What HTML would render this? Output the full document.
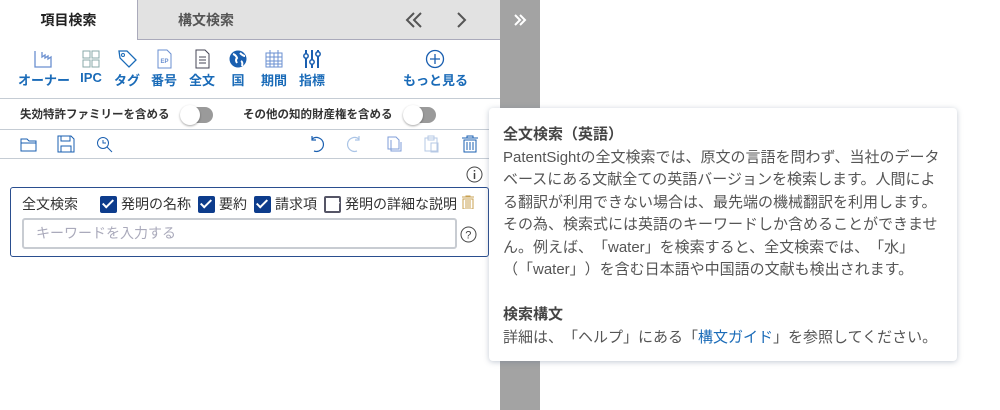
<!DOCTYPE html>
<html><head><meta charset="utf-8"><style>
*{box-sizing:border-box;margin:0;padding:0}
body{width:1000px;height:410px;background:#fff;position:relative;overflow:hidden;font-family:"Liberation Sans","Noto Sans CJK JP",sans-serif;color:#333;text-spacing-trim:space-all}
.abs{position:absolute}
.tab1{left:0;top:0;width:137px;height:40px;background:#fff;font-size:14px;font-weight:bold;text-align:center;line-height:40px;color:#222}
.tab2{left:137px;top:0;width:363px;height:40px;background:#e2e2e2;border-left:1px solid #aab;border-bottom:1px solid #aab}
.bar{left:500px;top:0;width:40px;height:410px;background:#a3a3a3}
.ic{position:absolute;top:49px;text-align:center;font-size:13px;font-weight:bold;color:#1a6bb8;white-space:nowrap}
.ic svg{display:block;margin:0 auto 1px}
.line{position:absolute;left:0;width:500px;height:1px;background:#c5ccd4}
.tog{position:absolute;width:32px;height:16px;background:#9a9a9a;border-radius:8px}
.tog:before{content:"";position:absolute;left:-1px;top:-2px;width:20px;height:20px;border-radius:50%;background:#fff;box-shadow:0 1px 2px rgba(0,0,0,.35)}
.cb{position:absolute;top:196px;width:17px;height:17px;background:#0d3c8c;border-radius:2px}
.cb:after{content:"";position:absolute;left:5px;top:1px;width:4px;height:9px;border:solid #fff;border-width:0 2px 2px 0;transform:rotate(45deg)}
.cl{position:absolute;top:194px;font-size:14px;color:#333;white-space:nowrap}
.tip{left:489px;top:108px;width:468px;height:253px;background:#fff;border-radius:4px;box-shadow:0 1px 6px rgba(80,100,130,.35);padding:16px 14px;font-size:15px;line-height:22.5px;color:#555;white-space:nowrap}
</style></head><body>
<div class="abs tab1">項目検索</div>
<div class="abs tab2"><span class="abs" style="left:40px;top:10px;font-size:14px;font-weight:bold;color:#555">構文検索</span>
<svg class="abs" style="left:266px;top:11px" width="20" height="18"><path d="M10 2L3 9l7 7M17 2l-7 7 7 7" stroke="#555" stroke-width="2" fill="none"/></svg>
<svg class="abs" style="left:317px;top:11px" width="12" height="18"><path d="M3 2l7 7-7 7" stroke="#555" stroke-width="2" fill="none"/></svg></div>
<div class="abs bar"><svg class="abs" style="left:13px;top:13px" width="14" height="14"><path d="M2 2l5 5-5 5M7 2l5 5-5 5" stroke="#fff" stroke-width="2" fill="none"/></svg></div>

<div class="ic" style="left:18px;width:50px"><svg width="20" height="20"><path d="M2 2v16h16V8l-3 2V7l-3 2V6l-3 2V3" stroke="#6a8fd0" fill="none" stroke-width="1.3"/></svg>オーナー</div>
<div class="ic" style="left:78px;width:26px"><svg width="20" height="20"><rect x="2" y="2" width="7" height="7" stroke="#8aa" fill="none"/><rect x="11" y="2" width="7" height="7" stroke="#8aa" fill="none"/><rect x="2" y="11" width="7" height="7" stroke="#8aa" fill="none"/><rect x="11" y="11" width="7" height="7" stroke="#8aa" fill="none"/></svg>IPC</div>
<div class="ic" style="left:113px;width:28px"><svg width="20" height="20"><path d="M2 2h8l9 9-7 7-9-9z" stroke="#1a6bb8" fill="none" stroke-width="1.3"/><circle cx="6" cy="6" r="1.5" stroke="#1a6bb8" fill="none"/></svg>タグ</div>
<div class="ic" style="left:150px;width:28px"><svg width="20" height="20"><path d="M4 1h9l4 4v14H4z" stroke="#6a8fd0" fill="none"/><text x="6.5" y="14" font-size="6" fill="#6a8fd0" font-family="Liberation Sans">EP</text></svg>番号</div>
<div class="ic" style="left:188px;width:28px"><svg width="20" height="20"><path d="M4 1h9l4 4v14H4z M7 8h7M7 11h7M7 14h7" stroke="#445" fill="none"/></svg>全文</div>
<div class="ic" style="left:227px;width:22px"><svg width="20" height="20"><circle cx="10" cy="10" r="8.5" fill="#1a5fb0"/><path d="M5 5q3 1 4 4-2 2 0 5M12 4q3 3 5 3M13 12q2 1 1 5" stroke="#fff" stroke-width="2" fill="none"/></svg>国</div>
<div class="ic" style="left:260px;width:28px"><svg width="20" height="20"><rect x="2" y="4" width="16" height="14" stroke="#6a8fd0" fill="none"/><path d="M2 8h16M2 12h16M2 15h16M6 4v14M10 4v14M14 4v14M6 1v4M14 1v4" stroke="#6a8fd0"/></svg>期間</div>
<div class="ic" style="left:298px;width:28px"><svg width="20" height="20"><path d="M4 1v18M10 1v18M16 1v18" stroke="#1a5fb0" stroke-width="2"/><circle cx="4" cy="7" r="2.2" fill="#fff" stroke="#1a5fb0" stroke-width="1.5"/><circle cx="10" cy="13" r="2.2" fill="#fff" stroke="#1a5fb0" stroke-width="1.5"/><circle cx="16" cy="5" r="2.2" fill="#fff" stroke="#1a5fb0" stroke-width="1.5"/></svg>指標</div>
<div class="ic" style="left:403px;width:64px"><svg width="20" height="20"><circle cx="10" cy="10" r="8.5" stroke="#1a5fb0" fill="none" stroke-width="1.3"/><path d="M10 5v10M5 10h10" stroke="#1a5fb0" stroke-width="1.3"/></svg>もっと見る</div>

<div class="line" style="top:98px"></div>
<div class="abs" style="left:20px;top:106px;font-size:11.5px;font-weight:bold;color:#333;white-space:nowrap">失効特許ファミリーを含める</div>
<div class="tog" style="left:181px;top:107px"></div>
<div class="abs" style="left:243px;top:106px;font-size:11.5px;font-weight:bold;color:#333;white-space:nowrap">その他の知的財産権を含める</div>
<div class="tog" style="left:404px;top:107px"></div>
<div class="line" style="top:129px"></div>
<svg class="abs" style="left:20px;top:135px" width="18" height="18"><path d="M1 4h6l2 2h7v10H1z M1 8h15" stroke="#1a5fb0" fill="none"/></svg>
<svg class="abs" style="left:57px;top:135px" width="18" height="18"><path d="M1 1h13l3 3v13H1z M4 1v5h9V1 M4 17v-6h10v6" stroke="#1a5fb0" fill="none"/></svg>
<svg class="abs" style="left:95px;top:135px" width="18" height="18"><circle cx="8" cy="8" r="5.5" stroke="#1a5fb0" fill="none"/><path d="M12 12l5 5M8 5v3h3" stroke="#1a5fb0" fill="none"/></svg>
<svg class="abs" style="left:308px;top:135px" width="18" height="18"><path d="M4 4a7 7 0 1 1 2 12M4 1v4h4" stroke="#1a5fb0" fill="none" stroke-width="1.2"/></svg>
<svg class="abs" style="left:345px;top:135px" width="18" height="18"><path d="M14 4a7 7 0 1 0-2 12M14 1v4h-4" stroke="#aac4e6" fill="none" stroke-width="1.2"/></svg>
<svg class="abs" style="left:386px;top:135px" width="18" height="18"><path d="M2 2h8l3 3v9H2z M5 5v11h10V7" stroke="#7f9ed8" fill="none"/></svg>
<svg class="abs" style="left:423px;top:135px" width="18" height="18"><path d="M2 3h12v13H2z M5 1h6v4H5z M8 8h7v9H8z" stroke="#b6c8e4" fill="none"/></svg>
<svg class="abs" style="left:461px;top:135px" width="18" height="18"><path d="M1 3h16M6 3V1h6v2M3 5h12v12H3z M6 7v8M9 7v8M12 7v8" stroke="#1a5fb0" fill="none"/></svg>
<div class="line" style="top:158px"></div>
<svg class="abs" style="left:466px;top:166px" width="17" height="17"><circle cx="8.5" cy="8.5" r="7.5" stroke="#444" fill="none"/><path d="M8.5 7v6M8.5 4v1.5" stroke="#444" stroke-width="1.5"/></svg>

<div class="abs" style="left:10px;top:187px;width:479px;height:70px;border:1px solid #2a4e8f;border-radius:3px"></div>
<div class="cl" style="left:22px">全文検索</div>
<div class="cb" style="left:100px"></div><div class="cl" style="left:121px">発明の名称</div>
<div class="cb" style="left:198px"></div><div class="cl" style="left:219px">要約</div>
<div class="cb" style="left:254px"></div><div class="cl" style="left:275px">請求項</div>
<div class="cb" style="left:324px;background:#fff;border:2px solid #556"></div><div class="cl" style="left:345px">発明の詳細な説明</div>
<svg class="abs" style="left:461px;top:195px" width="14" height="14"><path d="M1 2h12M5 2V1h4v1M2 4h10v10H2z M5 5v8M7 5v8M9 5v8" stroke="#c8a050" fill="none"/></svg>
<div class="abs" style="left:22px;top:218px;width:435px;height:31px;border:2px solid #c8ccd2;border-radius:3px;font-size:14px;color:#aab;line-height:27px;padding-left:12px">キーワードを入力する</div>
<svg class="abs" style="left:460px;top:226px" width="17" height="17"><circle cx="8.5" cy="8.5" r="7.5" stroke="#444" fill="none"/><text x="5.2" y="12.5" font-size="11" fill="#444" font-family="Liberation Sans">?</text></svg>

<div class="abs tip"><b style="font-weight:bold;color:#444">全文検索（英語）</b><br>PatentSightの全文検索では、原文の言語を問わず、当社のデータ<br>ベースにある文献全ての英語バージョンを検索します。人間によ<br>る翻訳が利用できない場合は、最先端の機械翻訳を利用します。<br>その為、検索式には英語のキーワードしか含めることができませ<br>ん。例えば、「water」を検索すると、全文検索では、「水」<br>（「water」）を含む日本語や中国語の文献も検出されます。<br><br><b style="font-weight:bold;color:#444">検索構文</b><br>詳細は、「ヘルプ」にある「<span style="color:#1a6bb8">構文ガイド</span>」を参照してください。</div>
</body></html>
